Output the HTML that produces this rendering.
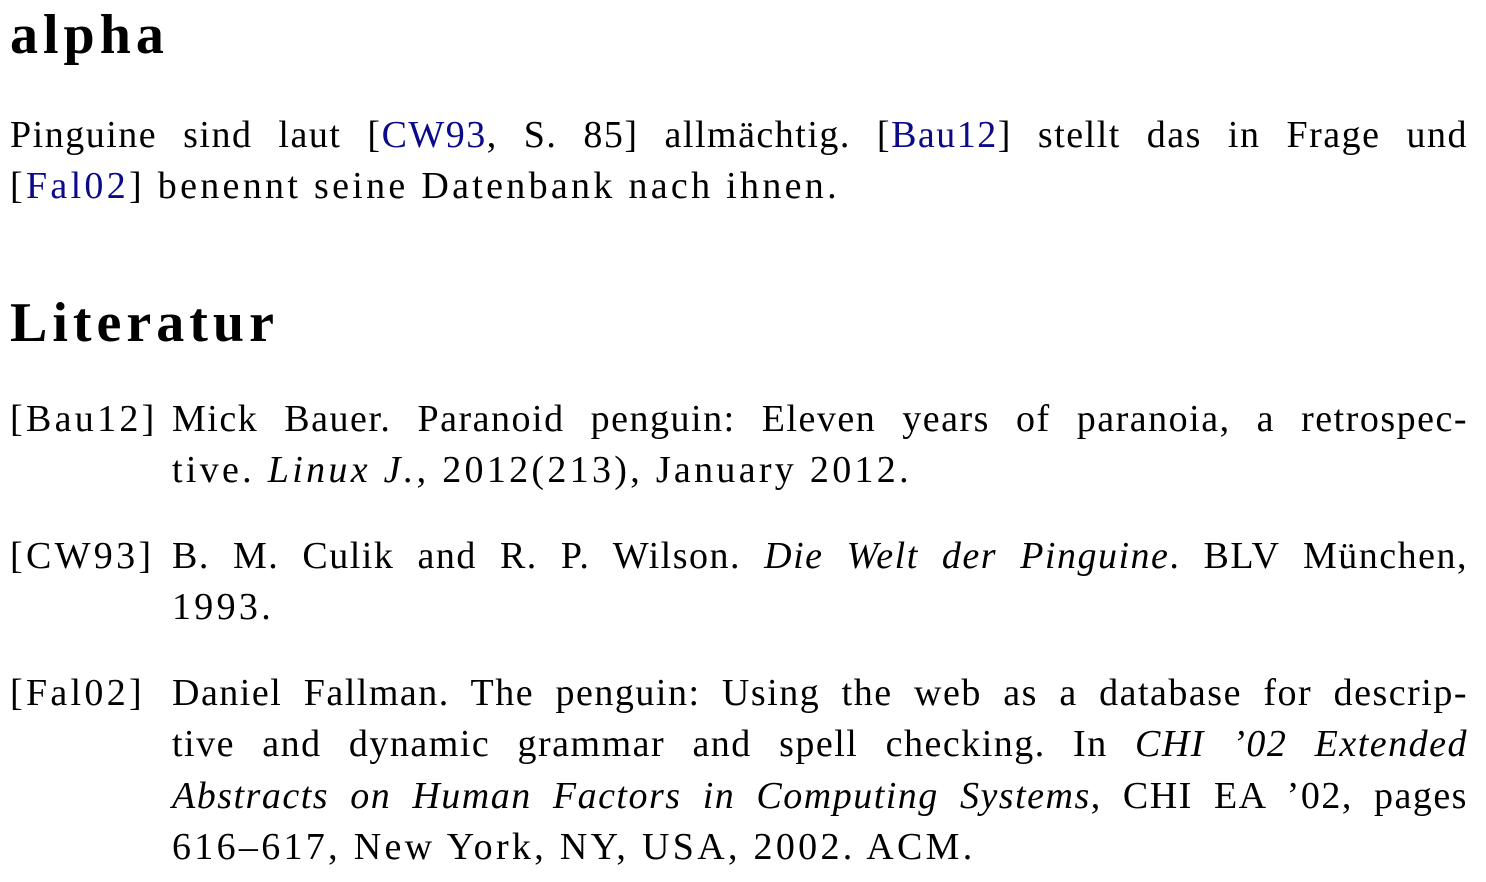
<!DOCTYPE html>
<html><head><meta charset="utf-8"><style>
body{margin:0;width:1486px;height:882px;background:#fff;position:relative;overflow:hidden;font-family:"Liberation Serif",serif;color:#000}
.l{position:absolute;font-size:38px;line-height:51px;white-space:nowrap;letter-spacing:3.3px}
.j{text-align:justify;text-align-last:justify;white-space:normal;letter-spacing:1.5px}
.h{position:absolute;font-weight:bold;font-size:56px;line-height:60px;left:10px;letter-spacing:5px}
a{color:#0b0b8a;text-decoration:none}
i{font-style:italic}
</style></head><body>
<div class="h" style="top:5px">alpha</div>
<div class="l j" style="left:10px;width:1458px;top:110px">Pinguine sind laut [<a>CW93</a>, S. 85] allmächtig. [<a>Bau12</a>] stellt das in Frage und</div>
<div class="l" style="left:10px;top:161px">[<a>Fal02</a>] benennt seine Datenbank nach ihnen.</div>
<div class="h" style="top:293px">Literatur</div>

<div class="l" style="left:10px;top:394px">[Bau12]</div>
<div class="l j" style="left:172px;width:1296px;top:394px">Mick Bauer. Paranoid penguin: Eleven years of paranoia, a retrospec-</div>
<div class="l" style="left:172px;top:445px">tive. <i>Linux J.</i>, 2012(213), January 2012.</div>

<div class="l" style="left:10px;top:531px">[CW93]</div>
<div class="l j" style="left:172px;width:1296px;top:531px">B. M. Culik and R. P. Wilson. <i>Die Welt der Pinguine</i>. BLV München,</div>
<div class="l" style="left:172px;top:582px">1993.</div>

<div class="l" style="left:10px;top:668px">[Fal02]</div>
<div class="l j" style="left:172px;width:1296px;top:668px">Daniel Fallman. The penguin: Using the web as a database for descrip-</div>
<div class="l j" style="left:172px;width:1296px;top:719px">tive and dynamic grammar and spell checking. In <i>CHI ’02 Extended</i></div>
<div class="l j" style="left:172px;width:1296px;top:771px"><i>Abstracts on Human Factors in Computing Systems</i>, CHI EA ’02, pages</div>
<div class="l" style="left:172px;top:822px">616–617, New York, NY, USA, 2002. ACM.</div>
</body></html>
